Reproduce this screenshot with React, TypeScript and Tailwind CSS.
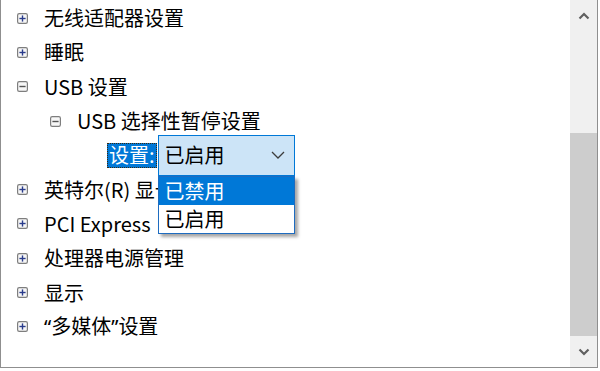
import React from "react";

const font = { fontFamily: '"Noto Sans CJK SC", "Noto Sans", sans-serif' };
const latin = { fontFamily: '"Noto Sans", "Noto Sans CJK SC", sans-serif' };

function Box({ open }: { open: boolean }) {
  return (
    <svg width="11" height="11" viewBox="0 0 11 11" className="shrink-0">
      <rect x="0.6" y="0.6" width="9.8" height="9.8" rx="1.6" fill="#f7f7f7" stroke="#7e7e7e" strokeWidth="1.2" />
      <line x1="2.4" y1="5.5" x2="8.6" y2="5.5" stroke={open ? "#555555" : "#2a3c8c"} strokeWidth="1.4" />
      {!open && <line x1="5.5" y1="2.4" x2="5.5" y2="8.6" stroke="#2a3c8c" strokeWidth="1.4" />}
    </svg>
  );
}

function Row({ level, open, children }: { level: number; open: boolean; children: React.ReactNode }) {
  return (
    <div className={`flex h-[34.3px] items-center gap-[16px] ${level === 0 ? "pl-[16px]" : "pl-[49px]"}`}>
      <Box open={open} />
      <span className="whitespace-nowrap text-[20px] leading-none text-black">{children}</span>
    </div>
  );
}

export default function App() {
  return (
    <div className="h-[371px] w-[600px] overflow-hidden bg-white" style={font}>
      <div className="flex h-[368px] w-[598px] border-b border-l border-r border-[#8f8f8f]">
        <div className="relative flex-1 pt-[1px]">
          <Row level={0} open={false}>无线适配器设置</Row>
          <Row level={0} open={false}>睡眠</Row>
          <Row level={0} open={true}>USB 设置</Row>
          <Row level={1} open={true}>USB 选择性暂停设置</Row>
          <div className="relative z-10 flex h-[34.3px] items-center pl-[106px]">
            <div className="flex h-[25px] items-center border border-dotted border-[#3a2a10] bg-[#0078d7] px-[1px] text-[20px] leading-none text-white">
              设置:
            </div>
            <div className="relative ml-[1px]">
              <div className="flex h-[41px] w-[137px] items-center justify-between border border-[#0078d7] bg-[#cce4f7] pl-[6px] pr-[8px]">
                <span className="text-[20px] leading-none text-black">已启用</span>
                <svg width="16" height="10" viewBox="0 0 16 10">
                  <polyline points="2,2 8,8 14,2" fill="none" stroke="#3c3c3c" strokeWidth="1.3" />
                </svg>
              </div>
              <div className="absolute left-0 top-full w-[137px] border border-[#1e6cc0] bg-white shadow-[3px_3px_3px_rgba(0,0,0,0.35)]">
                <div className="flex h-[28px] items-center bg-[#0078d7] pl-[6px] text-[20px] leading-none text-white">
                  已禁用
                </div>
                <div className="flex h-[28px] items-center pl-[6px] text-[20px] leading-none text-black">
                  已启用
                </div>
              </div>
            </div>
          </div>
          <Row level={0} open={false}>英特尔(R) 显卡设置</Row>
          <Row level={0} open={false}>PCI Express</Row>
          <Row level={0} open={false}>处理器电源管理</Row>
          <Row level={0} open={false}>显示</Row>
          <Row level={0} open={false}>
            <span style={latin}>“</span>多媒体<span style={latin}>”</span>设置
          </Row>
        </div>
        <div className="flex w-[27px] flex-col bg-[#f0f0f0] pt-[2px]">
          <div className="flex h-[27px] items-center justify-center">
            <svg width="12" height="8" viewBox="0 0 12 8">
              <polyline points="1.5,6.5 6,2 10.5,6.5" fill="none" stroke="#606060" strokeWidth="2.2" />
            </svg>
          </div>
          <div className="h-[104px]" />
          <div className="h-[203px] bg-[#cdcdcd]" />
          <div className="flex flex-1 items-center justify-center">
            <svg width="12" height="8" viewBox="0 0 12 8">
              <polyline points="1.5,1.5 6,6 10.5,1.5" fill="none" stroke="#606060" strokeWidth="2.2" />
            </svg>
          </div>
        </div>
      </div>
    </div>
  );
}
